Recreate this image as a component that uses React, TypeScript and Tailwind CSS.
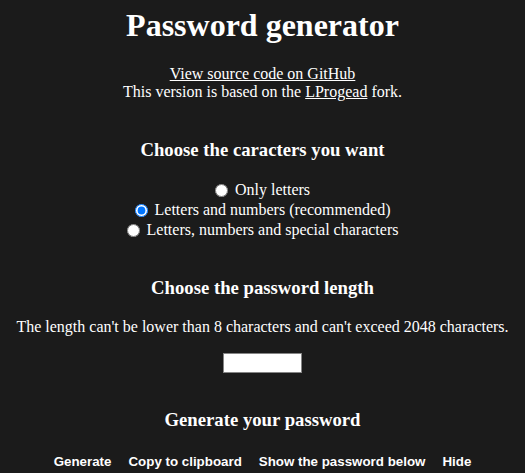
import React, { useState } from 'react'

const options = [
  { value: 'letters', label: 'Only letters' },
  { value: 'alnum', label: 'Letters and numbers (recommended)' },
  { value: 'all', label: 'Letters, numbers and special characters' },
]

const actions = ['Generate', 'Copy to clipboard', 'Show the password below', 'Hide']

export default function App() {
  const [mode, setMode] = useState('alnum')
  const [length, setLength] = useState('')

  return (
    <div className="min-h-screen bg-[#1b1b1b] pt-[7px] text-center text-white font-['Liberation_Serif',serif]">
      <h1 className="text-[32px] leading-[37px] font-bold">Password generator</h1>

      <div className="mt-[21px] text-[16px] leading-[18px]">
        <a href="#" className="underline">View source code on GitHub</a>
        <br />
        This version is based on the <a href="#" className="underline">LProgead</a> fork.
      </div>

      <h3 className="mt-[38px] text-[18.72px] leading-[22px] font-bold">Choose the caracters you want</h3>

      <div className="mt-[19px] text-[16px]">
        {options.map((o) => (
          <label key={o.value} className="flex h-[20px] items-center justify-center gap-[7px]">
            <input
              type="radio"
              name="mode"
              className="m-0 h-[13px] w-[13px]"
              checked={mode === o.value}
              onChange={() => setMode(o.value)}
            />
            <span>{o.label}</span>
          </label>
        ))}
      </div>

      <h3 className="mt-[37px] text-[18.72px] leading-[22px] font-bold">Choose the password length</h3>

      <p className="mt-[19px] text-[16px] leading-[18px]">
        The length can't be lower than 8 characters and can't exceed 2048 characters.
      </p>

      <div className="mt-[17px] flex justify-center">
        <input
          type="number"
          value={length}
          onChange={(e) => setLength(e.target.value)}
          className="h-[20px] w-[79px] border border-[#858585] bg-white text-black"
        />
      </div>

      <h3 className="mt-[36px] text-[18.72px] leading-[22px] font-bold">Generate your password</h3>

      <div className="mt-[21px] flex justify-center gap-[17px] font-['Liberation_Sans',Arial,sans-serif] text-[13.33px] font-bold leading-[15px]">
        {actions.map((a) => (
          <button key={a} className="bg-transparent py-[2px] text-white">
            {a}
          </button>
        ))}
      </div>
    </div>
  )
}
